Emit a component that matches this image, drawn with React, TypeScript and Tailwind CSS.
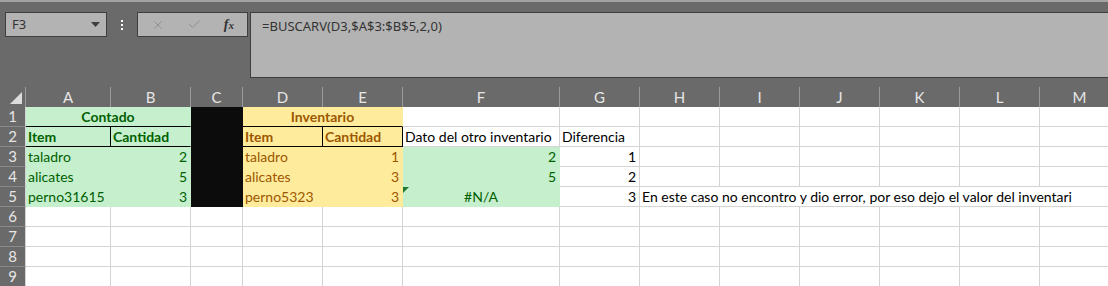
import React from 'react';
import { X, Check } from 'lucide-react';

type Fill = 'g' | 'y' | 'k' | 'w';

const fills: Record<Fill, string> = {
  g: 'bg-[#c6efce] border-[#c6efce] text-[#006100]',
  y: 'bg-[#ffeb9c] border-[#ffeb9c] text-[#9c5700]',
  k: 'bg-[#0c0c0c] border-[#0c0c0c]',
  w: 'bg-white border-[#d4d4d4] text-black',
};

const letters = ['A', 'B', 'C', 'D', 'E', 'F', 'G', 'H', 'I', 'J', 'K', 'L', 'M'];
const colW = [
  'w-[85px]', 'w-[80px]', 'w-[52px]', 'w-[80px]', 'w-[80px]', 'w-[157px]', 'w-[80px]',
  'w-[80px]', 'w-[80px]', 'w-[80px]', 'w-[80px]', 'w-[80px]', 'w-[80px]',
];

type CellProps = {
  w: string;
  fill?: Fill;
  align?: 'left' | 'right' | 'center';
  bold?: boolean;
  extra?: string;
  children?: React.ReactNode;
};

const Cell: React.FC<CellProps> = ({ w, fill = 'w', align = 'left', bold, extra = '', children }) => {
  const al = align === 'right' ? 'justify-end pr-[3px]' : align === 'center' ? 'justify-center' : 'justify-start pl-[2px]';
  return (
    <div
      className={`relative shrink-0 h-full flex items-end pb-[2px] whitespace-nowrap border-r border-b ${w} ${fills[fill]} ${al} ${bold ? 'font-bold' : ''} ${extra}`}
    >
      {children}
    </div>
  );
};

const RowHead: React.FC<{ n: number }> = ({ n }) => (
  <div className="shrink-0 w-[26px] h-full flex items-center justify-center border-r border-r-[#d4d4d4] border-b border-b-[#8a8a8a] bg-[#6a6a6a] text-[#e6e6e6] text-[15px]">
    {n}
  </div>
);

const Row: React.FC<{ n: number; children: React.ReactNode }> = ({ n, children }) => (
  <div className="flex h-[20px]">
    <RowHead n={n} />
    {children}
  </div>
);

const Blank: React.FC<{ from: number; to?: number }> = ({ from, to = 12 }) => (
  <>
    {letters.slice(from, to + 1).map((l, i) => (
      <Cell key={l} w={colW[from + i]} />
    ))}
  </>
);

export default function App() {
  return (
    <div className="w-[1108px] h-[286px] overflow-hidden bg-[#6a6a6a] font-['Lato','Liberation_Sans',sans-serif] text-[14px] leading-none">
      {/* toolbar */}
      <div className="h-[2px] bg-[#a3a3a3]" />
      <div className="flex items-start pt-[10px] pl-[5px] h-[85px]">
        <div className="w-[102px] h-[25px] border border-[#3e3e3e] bg-[#b3b3b3] flex items-center justify-between pl-[6px] pr-[6px] font-['Noto_Sans',sans-serif] text-[13px] text-[#333]">
          <span>F3</span>
          <svg width="9" height="5" viewBox="0 0 9 5"><path d="M0 0h9L4.5 5z" fill="#3e3e3e" /></svg>
        </div>
        <div className="w-[30px] h-[25px] flex flex-col items-center justify-center gap-[2px]">
          <span className="w-[2px] h-[2px] bg-white" />
          <span className="w-[2px] h-[2px] bg-white" />
          <span className="w-[2px] h-[2px] bg-white" />
        </div>
        <div className="w-[111px] h-[25px] border border-[#3e3e3e] bg-[#b3b3b3] flex items-center justify-around pl-[2px] pr-[2px]">
          <X size={14} strokeWidth={1.5} color="#8c8c8c" />
          <Check size={15} strokeWidth={1.5} color="#8c8c8c" />
          <span className="font-['Liberation_Serif',serif] italic font-bold text-[14px] text-[#333]">
            f<span className="text-[11px]">x</span>
          </span>
        </div>
        <div className="ml-[2px] flex-1 h-[66px] border border-r-0 border-[#3e3e3e] bg-[#b3b3b3] pl-[11px] pt-[7px] font-['Noto_Sans',sans-serif] text-[13px] text-[#333]">
          =BUSCARV(D3,$A$3:$B$5,2,0)
        </div>
      </div>

      {/* column header */}
      <div className="flex h-[20px] text-[15px]">
        <div className="shrink-0 w-[26px] h-full border-r border-[#9a9a9a] flex items-end justify-end pr-[3px] pb-[3px]">
          <svg width="12" height="12" viewBox="0 0 12 12"><path d="M12 0V12H0z" fill="#dcdcdc" /></svg>
        </div>
        {letters.map((l, i) => (
          <div
            key={l}
            className={`shrink-0 h-full flex items-center justify-center border-r border-[#9a9a9a] text-[#e6e6e6] ${colW[i]}`}
          >
            {l}
          </div>
        ))}
      </div>

      {/* rows */}
      <Row n={1}>
        <Cell w="w-[165px]" fill="g" align="center" bold extra="border-b-black">Contado</Cell>
        <Cell w={colW[2]} fill="k" />
        <Cell w="w-[160px]" fill="y" align="center" bold extra="border-b-black">Inventario</Cell>
        <Blank from={5} />
      </Row>
      <Row n={2}>
        <Cell w={colW[0]} fill="g" bold extra="border-black">Item</Cell>
        <Cell w={colW[1]} fill="g" bold extra="border-b-black">Cantidad</Cell>
        <Cell w={colW[2]} fill="k" />
        <Cell w={colW[3]} fill="y" bold extra="border-black">Item</Cell>
        <Cell w={colW[4]} fill="y" bold extra="border-black">Cantidad</Cell>
        <Cell w={colW[5]}>Dato del otro inventario</Cell>
        <Cell w={colW[6]}>Diferencia</Cell>
        <Blank from={7} />
      </Row>
      <Row n={3}>
        <Cell w={colW[0]} fill="g">taladro</Cell>
        <Cell w={colW[1]} fill="g" align="right">2</Cell>
        <Cell w={colW[2]} fill="k" />
        <Cell w={colW[3]} fill="y">taladro</Cell>
        <Cell w={colW[4]} fill="y" align="right">1</Cell>
        <Cell w={colW[5]} fill="g" align="right">2</Cell>
        <Cell w={colW[6]} align="right">1</Cell>
        <Blank from={7} />
      </Row>
      <Row n={4}>
        <Cell w={colW[0]} fill="g">alicates</Cell>
        <Cell w={colW[1]} fill="g" align="right">5</Cell>
        <Cell w={colW[2]} fill="k" />
        <Cell w={colW[3]} fill="y">alicates</Cell>
        <Cell w={colW[4]} fill="y" align="right">3</Cell>
        <Cell w={colW[5]} fill="g" align="right">5</Cell>
        <Cell w={colW[6]} align="right">2</Cell>
        <Blank from={7} />
      </Row>
      <Row n={5}>
        <Cell w={colW[0]} fill="g">perno31615</Cell>
        <Cell w={colW[1]} fill="g" align="right">3</Cell>
        <Cell w={colW[2]} fill="k" />
        <Cell w={colW[3]} fill="y">perno5323</Cell>
        <Cell w={colW[4]} fill="y" align="right">3</Cell>
        <Cell w={colW[5]} fill="g" align="center">
          <svg className="absolute top-0 left-0" width="6" height="6" viewBox="0 0 6 6"><path d="M0 0h6L0 6z" fill="#1d7a30" /></svg>
          #N/A
        </Cell>
        <Cell w={colW[6]} align="right">3</Cell>
        <Cell w="w-[480px]">En este caso no encontro y dio error, por eso dejo el valor del inventari</Cell>
      </Row>
      {[6, 7, 8, 9].map((n) => (
        <Row key={n} n={n}>
          <Blank from={0} />
        </Row>
      ))}
    </div>
  );
}
